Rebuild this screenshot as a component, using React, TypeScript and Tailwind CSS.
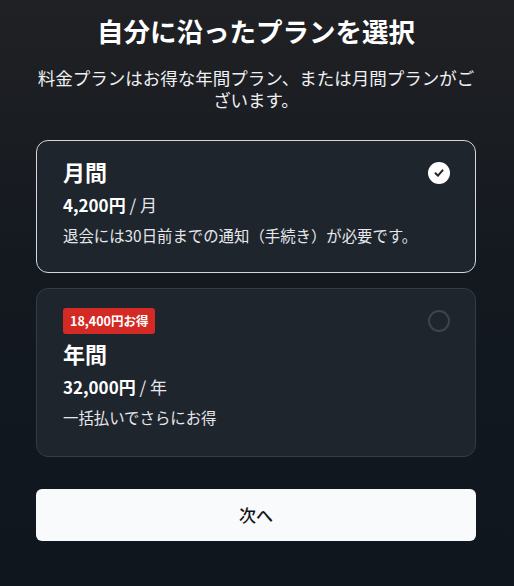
import React from "react";

function Check() {
  return (
    <div className="absolute right-[25px] top-[21px] flex h-[22px] w-[22px] items-center justify-center rounded-full bg-white">
      <svg width="12" height="12" viewBox="0 0 12 12" fill="none">
        <path d="M2.5 6.3 L5 8.7 L9.6 3.4" stroke="#1f252d" strokeWidth="2" strokeLinecap="round" strokeLinejoin="round" />
      </svg>
    </div>
  );
}

function Empty() {
  return <div className="absolute right-[25px] top-[21px] h-[22px] w-[22px] rounded-full border-2 border-[#3d444e]" />;
}

export default function App() {
  return (
    <div
      className="min-h-[586px] w-[514px] bg-[linear-gradient(180deg,#202124_0%,#141920_45%,#0f161e_100%)] text-white"
      style={{ fontFamily: '"Noto Sans CJK JP", "Noto Sans", sans-serif' }}
    >
      <div className="ml-[36px] flex w-[440px] flex-col pt-[12px]">
        <h1 className="text-center text-[26.5px] font-bold leading-[38px]">自分に沿ったプランを選択</h1>
        <p className="mt-[17px] text-center text-[17.5px] leading-[22px] text-[#eef0f2]">
          料金プランはお得な年間プラン、または月間プランがございます。
        </p>

        <div className="relative mt-[29px] h-[133px] rounded-[12px] border border-[#d4d7dc] bg-[#1f252d] px-[26px] pt-[16px]">
          <Check />
          <div className="text-[22px] font-bold leading-[28px]">月間</div>
          <div className="mt-[8px] text-[17px] leading-[24px]">
            <span className="font-bold">4,200円</span>
            <span className="text-[#e5e7eb]"> / 月</span>
          </div>
          <div className="mt-[8px] text-[15.4px] leading-[20px] text-[#e5e7eb]">退会には30日前までの通知（手続き）が必要です。</div>
        </div>

        <div className="relative mt-[15px] h-[169px] rounded-[12px] border border-[#353c46] bg-[#1f252d] px-[26px] pt-[18px]">
          <Empty />
          <div className="inline-flex h-[26px] items-center rounded-[3px] bg-[#d42a25] px-[7px] text-[12.5px] font-bold leading-none text-white">
            18,400円お得
          </div>
          <div className="mt-[5px] text-[22px] font-bold leading-[28px]">年間</div>
          <div className="mt-[8px] text-[17px] leading-[24px]">
            <span className="font-bold">32,000円</span>
            <span className="text-[#e5e7eb]"> / 年</span>
          </div>
          <div className="mt-[8px] text-[15.4px] leading-[20px] text-[#e5e7eb]">一括払いでさらにお得</div>
        </div>

        <button className="mt-[32px] flex h-[52px] items-center justify-center rounded-[6px] bg-[#f8fafb] text-[17px] font-medium text-[#111418]">
          次へ
        </button>
      </div>
    </div>
  );
}
